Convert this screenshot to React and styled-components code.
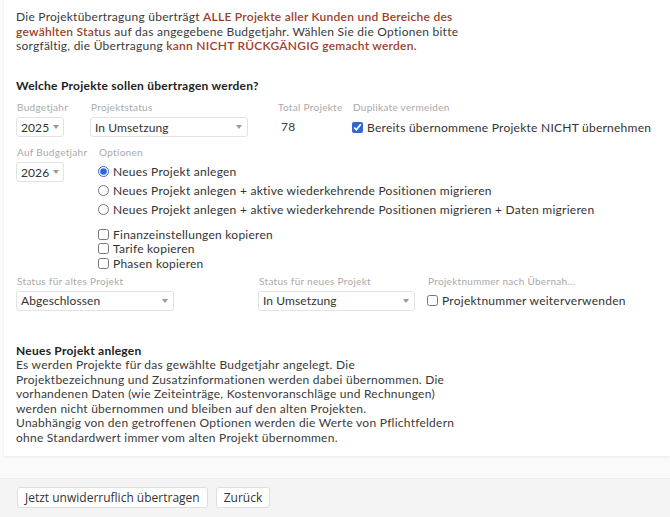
import styled, { createGlobalStyle } from 'styled-components';

const GlobalStyle = createGlobalStyle`
  html, body {
    margin: 0;
    padding: 0;
    background: #fafafa;
  }
  body {
    font-family: Lato, "Open Sans", sans-serif;
    color: #3a3a3a;
    font-size: 12px;
    letter-spacing: 0.25px;
  }
`;

const Page = styled.div`
  min-height: 517px;
  display: flex;
  flex-direction: column;
`;

const Panel = styled.div`
  margin-left: 4px;
  height: 456px;
  box-sizing: border-box;
  padding: 10px 12px 0 12px;
  background: #fff;
  box-shadow: 0 1px 3px rgba(0, 0, 0, 0.07);
`;

const Text = styled.p`
  margin: 0;
  line-height: 14.5px;
  white-space: nowrap;
`;

const Warn = styled.span`
  color: #a0402a;
  font-weight: 600;
`;

const Heading = styled.div`
  font-weight: 700;
  line-height: 14.5px;
  margin-top: ${(p) => p.$top}px;
  color: #222;
`;

const Row = styled.div`
  display: flex;
  align-items: flex-start;
  margin-top: ${(p) => p.$top}px;
`;

const Field = styled.div`
  flex: ${(p) => (p.$w ? `0 0 ${p.$w}px` : '1 1 auto')};
  min-width: 0;
  display: flex;
  flex-direction: column;
`;

const Label = styled.div`
  font-size: 10px;
  line-height: 12px;
  letter-spacing: 0.3px;
  color: #a9a9a9;
  margin: 0 0 4px 1px;
  white-space: nowrap;
`;

const Select = styled.div`
  box-sizing: border-box;
  width: ${(p) => p.$w}px;
  height: 20px;
  border: 1px solid #e3e3e3;
  border-radius: 3px;
  background: #fff;
  display: flex;
  align-items: center;
  justify-content: space-between;
  gap: 4px;
  padding: 0 5px 0 4px;
  font-size: 12px;
  letter-spacing: 0.1px;
  color: #333;
`;

const Caret = styled.span`
  flex: none;
  width: 0;
  height: 0;
  border-left: 3.5px solid transparent;
  border-right: 3.5px solid transparent;
  border-top: 4px solid #9a9a9a;
`;

const Value = styled.div`
  height: 20px;
  line-height: 20px;
  padding-left: 4px;
`;

const Check = styled.label`
  display: flex;
  align-items: center;
  gap: 4px;
  height: ${(p) => p.$h || 14.5}px;
  white-space: nowrap;
  color: #333;

  input {
    margin: 0;
    width: 11px;
    height: 11px;
    accent-color: #2f66d6;
  }
`;

const Options = styled.div`
  display: flex;
  flex-direction: column;
  margin-top: ${(p) => p.$top || 0}px;
`;

const Footer = styled.div`
  margin-top: auto;
  height: 39px;
  box-sizing: border-box;
  border-top: 1px solid #f2efdc;
  background: #f4f4f4;
  padding: 8px 17px 0;
  display: flex;
  gap: 8px;
  align-items: flex-start;
`;

const Button = styled.button`
  height: 21px;
  padding: 0 7px;
  border: 1px solid #dedede;
  border-radius: 3px;
  background: #fff;
  font-family: "Open Sans", "Liberation Sans", sans-serif;
  font-size: 12px;
  letter-spacing: 0;
  color: #333;
`;

const Dropdown = ({ value, w }) => (
  <Select $w={w}>
    <span>{value}</span>
    <Caret />
  </Select>
);

const App = () => (
  <Page>
    <GlobalStyle />
    <Panel>
      <Text>
        Die Projektübertragung überträgt <Warn>ALLE Projekte aller Kunden und Bereiche des</Warn>
        <br />
        <Warn>gewählten Status</Warn> auf das angegebene Budgetjahr. Wählen Sie die Optionen bitte
        <br />
        sorgfältig, die Übertragung <Warn>kann NICHT RÜCKGÄNGIG gemacht werden.</Warn>
      </Text>

      <Heading $top={25}>Welche Projekte sollen übertragen werden?</Heading>

      <Row $top={8}>
        <Field $w={74}>
          <Label>Budgetjahr</Label>
          <Dropdown value="2025" w={48} />
        </Field>
        <Field $w={187}>
          <Label>Projektstatus</Label>
          <Dropdown value="In Umsetzung" w={158} />
        </Field>
        <Field $w={75}>
          <Label>Total Projekte</Label>
          <Value>78</Value>
        </Field>
        <Field>
          <Label>Duplikate vermeiden</Label>
          <Check $h={20}>
            <input type="checkbox" defaultChecked />
            Bereits übernommene Projekte NICHT übernehmen
          </Check>
        </Field>
      </Row>

      <Row $top={9}>
        <Field $w={82}>
          <Label>Auf Budgetjahr</Label>
          <Dropdown value="2026" w={48} />
        </Field>
        <Field>
          <Label>Optionen</Label>
          <Options>
            <Check $h={19}>
              <input type="radio" name="mode" defaultChecked />
              Neues Projekt anlegen
            </Check>
            <Check $h={19}>
              <input type="radio" name="mode" />
              Neues Projekt anlegen + aktive wiederkehrende Positionen migrieren
            </Check>
            <Check $h={19}>
              <input type="radio" name="mode" />
              Neues Projekt anlegen + aktive wiederkehrende Positionen migrieren + Daten migrieren
            </Check>
          </Options>
          <Options $top={8}>
            <Check>
              <input type="checkbox" />
              Finanzeinstellungen kopieren
            </Check>
            <Check>
              <input type="checkbox" />
              Tarife kopieren
            </Check>
            <Check>
              <input type="checkbox" />
              Phasen kopieren
            </Check>
          </Options>
        </Field>
      </Row>

      <Row $top={4}>
        <Field $w={242}>
          <Label>Status für altes Projekt</Label>
          <Dropdown value="Abgeschlossen" w={158} />
        </Field>
        <Field $w={169}>
          <Label>Status für neues Projekt</Label>
          <Dropdown value="In Umsetzung" w={157} />
        </Field>
        <Field>
          <Label>Projektnummer nach Übernah...</Label>
          <Check $h={20}>
            <input type="checkbox" />
            Projektnummer weiterverwenden
          </Check>
        </Field>
      </Row>

      <Heading $top={33}>Neues Projekt anlegen</Heading>
      <Text>
        Es werden Projekte für das gewählte Budgetjahr angelegt. Die
        <br />
        Projektbezeichnung und Zusatzinformationen werden dabei übernommen. Die
        <br />
        vorhandenen Daten (wie Zeiteinträge, Kostenvoranschläge und Rechnungen)
        <br />
        werden nicht übernommen und bleiben auf den alten Projekten.
        <br />
        Unabhängig von den getroffenen Optionen werden die Werte von Pflichtfeldern
        <br />
        ohne Standardwert immer vom alten Projekt übernommen.
      </Text>
    </Panel>

    <Footer>
      <Button>Jetzt unwiderruflich übertragen</Button>
      <Button>Zurück</Button>
    </Footer>
  </Page>
);

export default App;
